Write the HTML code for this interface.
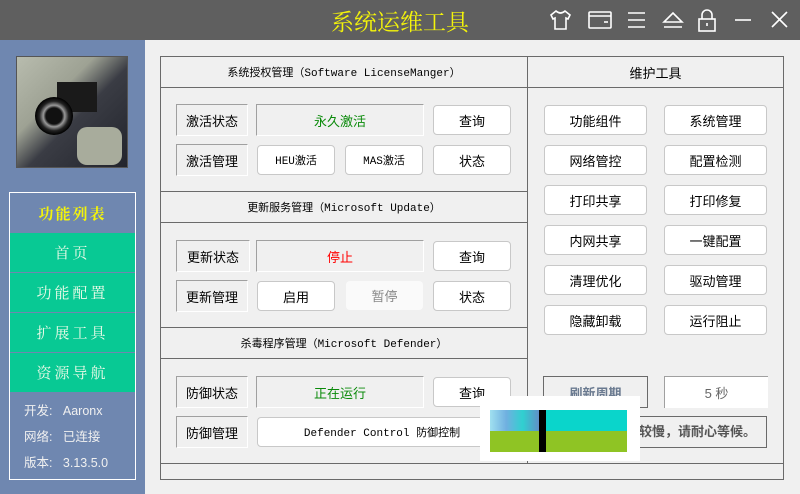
<!DOCTYPE html>
<html><head><meta charset="utf-8"><style>
*{margin:0;padding:0;box-sizing:border-box}
body{width:800px;height:494px;overflow:hidden;background:#f0f0f0;font-family:"Liberation Sans","Noto Sans CJK SC",sans-serif;font-size:13px;color:#000;position:relative}
.a{position:absolute}
.t{display:flex;align-items:center;justify-content:center}
.lbl{background:#f0f0f0;border:1px solid #a0a0a0;border-right-color:#fff;border-bottom-color:#fff}
.btn{background:#fff;border:1px solid #c8c8c8;border-radius:4px}
.mono{font-family:"Liberation Mono","Noto Sans CJK SC",monospace;font-size:11px}
.menu{background:#08c994;color:#eefbe9;font-family:"Noto Serif CJK SC",serif;font-size:15px;letter-spacing:3px}
.ln{background:#6a6a6a}
</style></head><body>
<div class="a" style="left:0;top:0;width:800px;height:40px;background:#5f5f5f"></div>
<div class="a t" style="left:300px;top:4px;width:200px;height:32px;color:#f4f40a;font-size:23px;font-family:'Noto Serif CJK SC',serif">系统运维工具</div>
<svg class="a" style="left:548px;top:8px" width="245" height="24" fill="none" stroke="#fff" stroke-width="1.6">
<path d="M8 3 L3 7 L5 11 L7 10 L7 21 L18 21 L18 10 L20 11 L22 7 L17 3 Q12.5 7 8 3Z"/>
<rect x="41" y="4" width="22" height="16" rx="1"/><line x1="41" y1="8" x2="63" y2="8"/><line x1="56" y1="14" x2="60" y2="14"/>
<line x1="80" y1="5" x2="97" y2="5"/><line x1="80" y1="12" x2="97" y2="12"/><line x1="80" y1="19" x2="97" y2="19"/>
<path d="M116 14 L125 5 L134 14Z"/><line x1="116" y1="19" x2="134" y2="19"/>
<rect x="151" y="11" width="16" height="12"/><path d="M154 11 V7 a5 5 0 0 1 10 0 V11"/><line x1="159" y1="15" x2="159" y2="18"/>
<line x1="187" y1="12" x2="203" y2="12"/>
<line x1="224" y1="4" x2="239" y2="19"/><line x1="239" y1="4" x2="224" y2="19"/>
</svg>
<div class="a" style="left:0;top:40px;width:145px;height:454px;background:#6f87b0"></div>
<div class="a" style="left:16px;top:56px;width:112px;height:112px;border:1px solid #555;overflow:hidden;background:linear-gradient(135deg,#b8bcae 0%,#9ea294 35%,#3a3c44 55%,#22242c 100%)">
<div class="a" style="left:40px;top:25px;width:40px;height:30px;background:#1a1a1a"></div>
<div class="a" style="left:18px;top:40px;width:38px;height:38px;border-radius:50%;background:radial-gradient(circle,#111 30%,#999 40%,#222 55%,#000 70%)"></div>
<div class="a" style="left:60px;top:70px;width:45px;height:38px;background:#a8ac9c;border-radius:10px"></div>
</div>
<div class="a" style="left:9px;top:192px;width:127px;height:288px;border:1px solid #fff"></div>
<div class="a t" style="left:10px;top:193px;width:125px;height:40px;color:#f4f40a;font-weight:bold;font-size:15px;font-family:'Noto Serif CJK SC',serif;letter-spacing:2px">功能列表</div>
<div class="a t menu" style="left:10px;top:233px;width:125px;height:39px">首页</div>
<div class="a t menu" style="left:10px;top:273px;width:125px;height:39px">功能配置</div>
<div class="a t menu" style="left:10px;top:313px;width:125px;height:39px">扩展工具</div>
<div class="a t menu" style="left:10px;top:353px;width:125px;height:39px">资源导航</div>
<div class="a" style="left:24px;top:398px;color:#f0f0f0;font-size:12.5px;line-height:26px">开发:&nbsp;&nbsp;&nbsp;Aaronx<br>网络:&nbsp;&nbsp;&nbsp;已连接<br>版本:&nbsp;&nbsp;&nbsp;3.13.5.0</div>

<div class="a" style="left:160px;top:56px;width:624px;height:424px;border:1px solid #6a6a6a"></div>
<div class="a ln" style="left:527px;top:56px;width:1px;height:408px"></div>
<div class="a ln" style="left:160px;top:87px;width:624px;height:1px"></div>
<div class="a ln" style="left:160px;top:463px;width:624px;height:1px"></div>
<div class="a ln" style="left:160px;top:191px;width:368px;height:1px"></div>
<div class="a ln" style="left:160px;top:222px;width:368px;height:1px"></div>
<div class="a ln" style="left:160px;top:327px;width:368px;height:1px"></div>
<div class="a ln" style="left:160px;top:358px;width:368px;height:1px"></div>
<div class="a t mono" style="left:161px;top:57px;width:366px;height:30px">系统授权管理（Software LicenseManger）</div>
<div class="a t mono" style="left:161px;top:192px;width:366px;height:30px">更新服务管理（Microsoft Update）</div>
<div class="a t mono" style="left:161px;top:328px;width:366px;height:30px">杀毒程序管理（Microsoft Defender）</div>
<div class="a t" style="left:528px;top:57px;width:255px;height:30px">维护工具</div>

<div class="a t lbl" style="left:176px;top:104px;width:72px;height:32px">激活状态</div>
<div class="a t lbl" style="left:256px;top:104px;width:168px;height:32px;color:#0a8a0a">永久激活</div>
<div class="a t btn" style="left:433px;top:105px;width:78px;height:30px">查询</div>
<div class="a t lbl" style="left:176px;top:144px;width:72px;height:32px">激活管理</div>
<div class="a t btn mono" style="left:257px;top:145px;width:78px;height:30px">HEU激活</div>
<div class="a t btn mono" style="left:345px;top:145px;width:78px;height:30px">MAS激活</div>
<div class="a t btn" style="left:433px;top:145px;width:78px;height:30px">状态</div>

<div class="a t lbl" style="left:176px;top:240px;width:74px;height:32px">更新状态</div>
<div class="a t lbl" style="left:256px;top:240px;width:168px;height:32px;color:#f00">停止</div>
<div class="a t btn" style="left:433px;top:241px;width:78px;height:30px">查询</div>
<div class="a t lbl" style="left:176px;top:280px;width:72px;height:32px">更新管理</div>
<div class="a t btn" style="left:257px;top:281px;width:78px;height:30px">启用</div>
<div class="a t" style="left:346px;top:281px;width:77px;height:29px;background:#fafafa;color:#888;border-radius:4px">暂停</div>
<div class="a t btn" style="left:433px;top:281px;width:78px;height:30px">状态</div>

<div class="a t lbl" style="left:176px;top:376px;width:72px;height:32px">防御状态</div>
<div class="a t lbl" style="left:256px;top:376px;width:168px;height:32px;color:#0a8a0a">正在运行</div>
<div class="a t btn" style="left:433px;top:377px;width:78px;height:30px">查询</div>
<div class="a t lbl" style="left:176px;top:416px;width:72px;height:32px">防御管理</div>
<div class="a t btn mono" style="left:257px;top:417px;width:250px;height:30px">Defender Control 防御控制</div>

<div class="a t btn" style="left:544px;top:105px;width:103px;height:30px">功能组件</div>
<div class="a t btn" style="left:664px;top:105px;width:103px;height:30px">系统管理</div>
<div class="a t btn" style="left:544px;top:145px;width:103px;height:30px">网络管控</div>
<div class="a t btn" style="left:664px;top:145px;width:103px;height:30px">配置检测</div>
<div class="a t btn" style="left:544px;top:185px;width:103px;height:30px">打印共享</div>
<div class="a t btn" style="left:664px;top:185px;width:103px;height:30px">打印修复</div>
<div class="a t btn" style="left:544px;top:225px;width:103px;height:30px">内网共享</div>
<div class="a t btn" style="left:664px;top:225px;width:103px;height:30px">一键配置</div>
<div class="a t btn" style="left:544px;top:265px;width:103px;height:30px">清理优化</div>
<div class="a t btn" style="left:664px;top:265px;width:103px;height:30px">驱动管理</div>
<div class="a t btn" style="left:544px;top:305px;width:103px;height:30px">隐藏卸载</div>
<div class="a t btn" style="left:664px;top:305px;width:103px;height:30px">运行阻止</div>
<div class="a t" style="left:543px;top:376px;width:105px;height:32px;border:1px solid #6a6a6a;color:#6a7a90;font-weight:bold">刷新周期</div>
<div class="a t" style="left:664px;top:376px;width:104px;height:32px;background:#fff;border-left:1px solid #a0a0a0;border-top:1px solid #a0a0a0;color:#666">5 秒</div>
<div class="a" style="left:520px;top:416px;width:247px;height:32px;border:1px solid #6a6a6a;color:#555;font-weight:bold;line-height:30px;padding-left:118px">较慢，请耐心等候。</div>
<div class="a" style="left:480px;top:396px;width:160px;height:65px;background:#fff">
<div class="a" style="left:10px;top:14px;width:137px;height:42px;background:#8fc424"></div>
<div class="a" style="left:66px;top:14px;width:81px;height:21px;background:#0ad5cb"></div>
<div class="a" style="left:10px;top:14px;width:49px;height:21px;background:linear-gradient(90deg,#a0e0f0,#70b0e0,#30d0d0,#6090c8)"></div>
<div class="a" style="left:59px;top:14px;width:7px;height:42px;background:#000"></div>
</div>
</body></html>
